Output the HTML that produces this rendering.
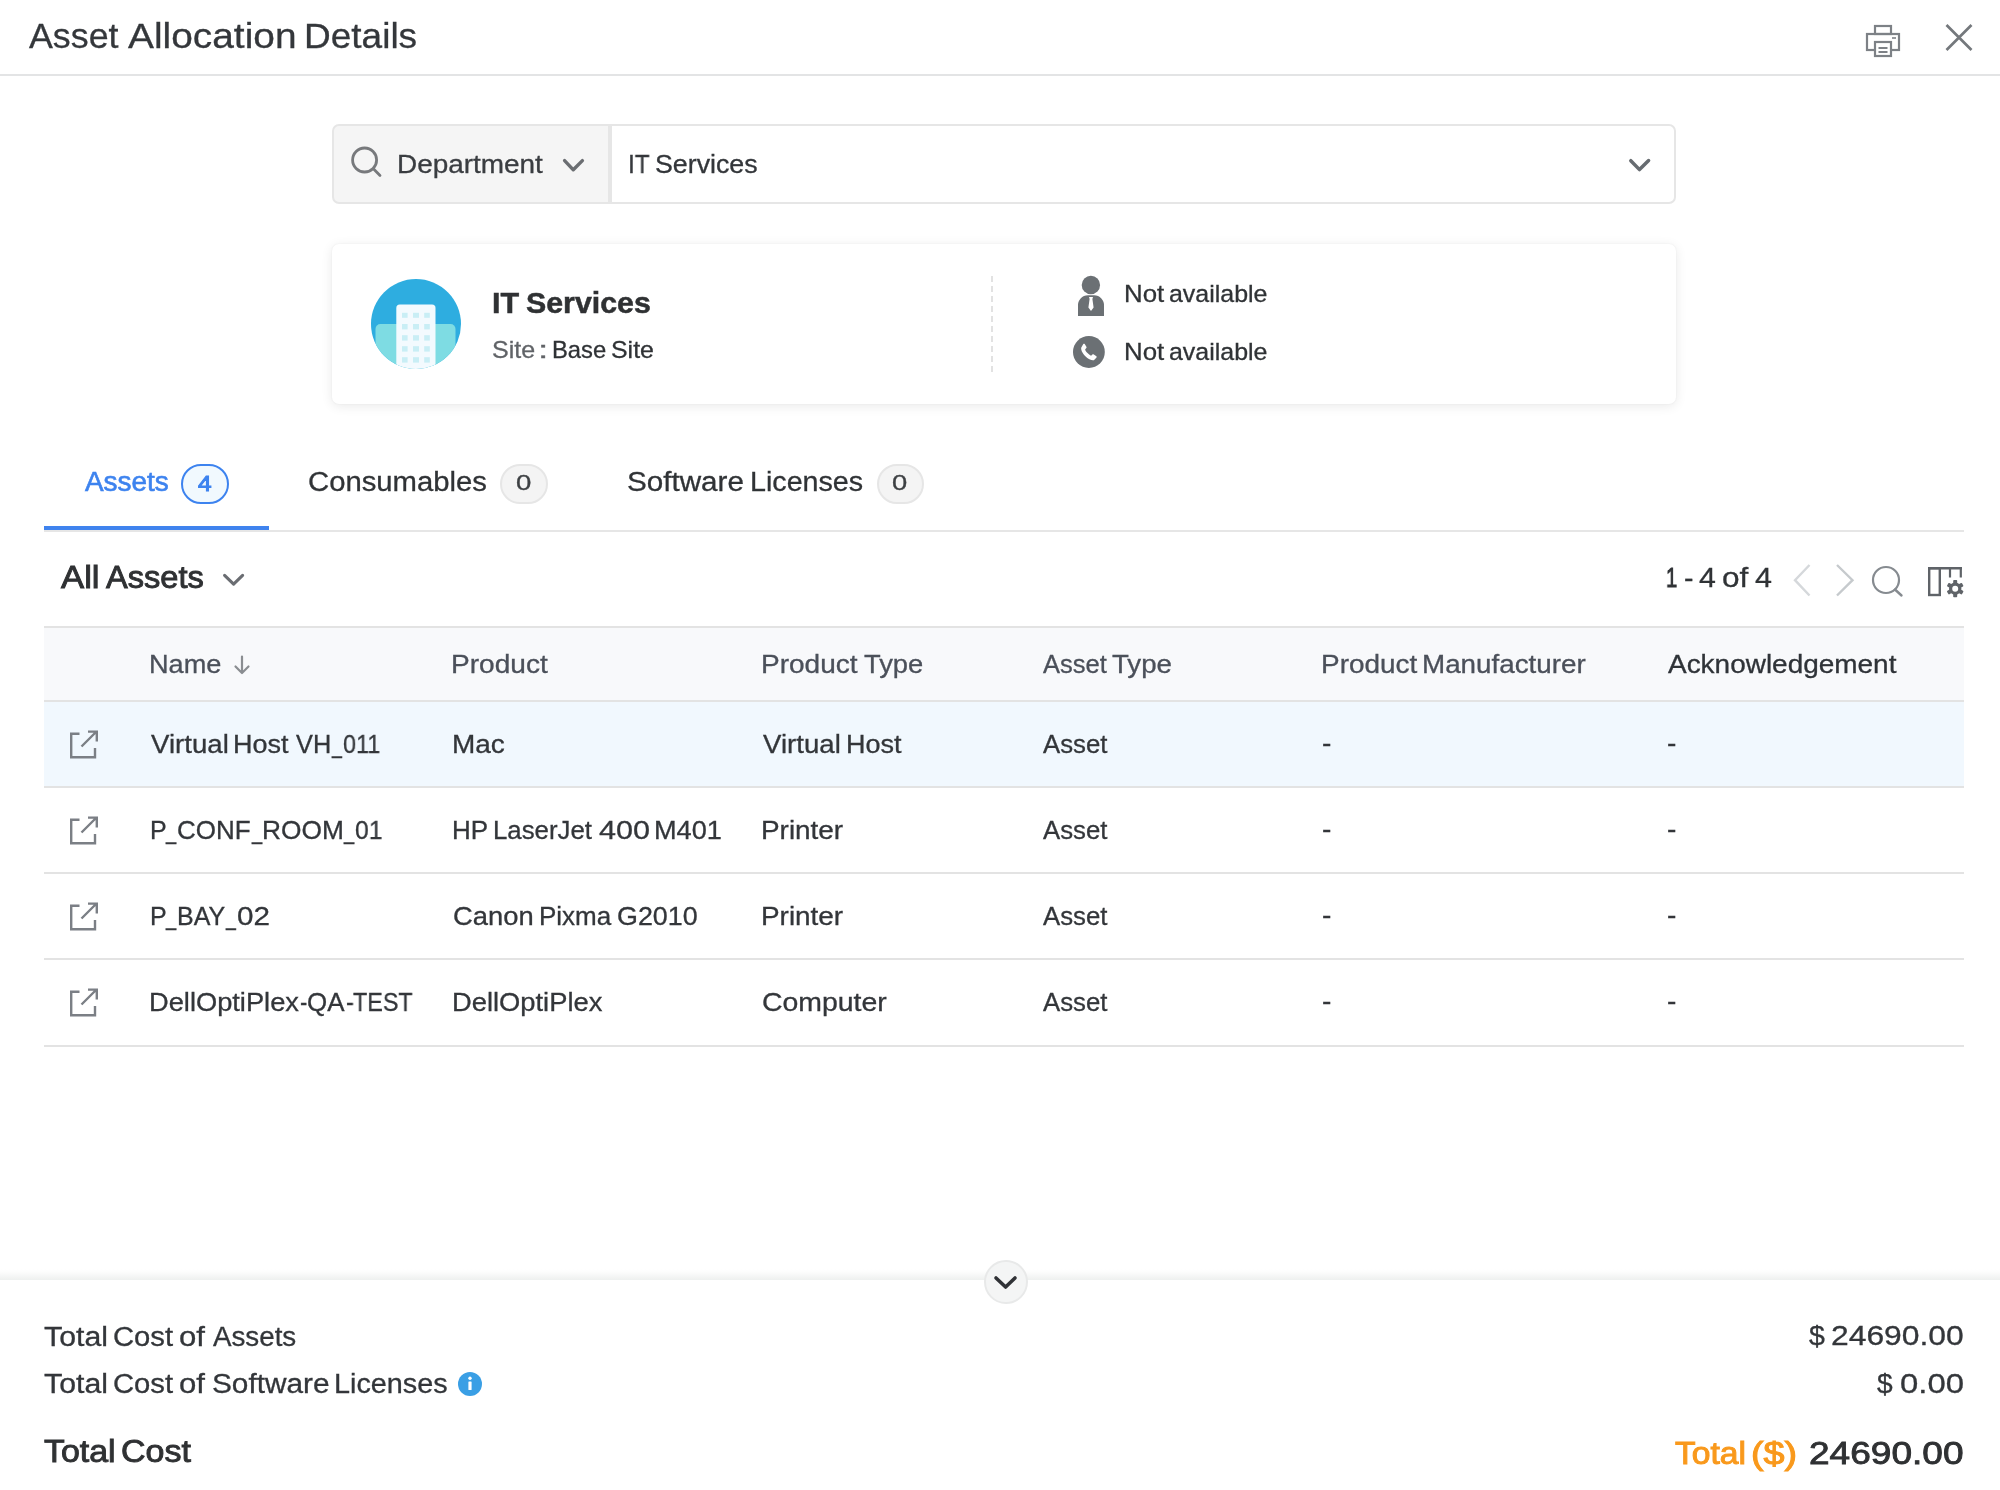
<!DOCTYPE html>
<html lang="en">
<head>
<meta charset="utf-8">
<title>Asset Allocation Details</title>
<style>
*{box-sizing:border-box;margin:0;padding:0}
html,body{width:2000px;height:1490px;overflow:hidden;background:#fff}
body{position:relative;font-family:"Liberation Sans",sans-serif;color:#333}
.t{position:absolute;white-space:pre;transform-origin:0 50%;will-change:transform;-webkit-text-stroke-width:0.3px;font-family:"Liberation Sans",sans-serif}
.a{position:absolute}
svg{position:absolute;overflow:visible}
</style>
</head>
<body>
<!-- header -->
<div class="a" style="left:0;top:74px;width:2000px;height:2px;background:#e3e4e5"></div>
<svg style="left:1860px;top:20px" width="50" height="44" viewBox="1860 20 50 44" fill="none" stroke="#7d8186" stroke-width="2.2">
 <rect x="1875" y="26" width="16" height="8"/>
 <rect x="1867" y="34" width="32" height="16"/>
 <rect x="1875" y="42" width="16" height="14" fill="#fff"/>
 <path d="M1878.5 48H1887.5M1878.5 52H1887.5" stroke-width="1.8"/>
 <path d="M1892 38H1896" stroke-width="1.6"/>
</svg>
<svg style="left:1940px;top:18px" width="40" height="40" viewBox="1940 18 40 40" fill="none" stroke="#74787c" stroke-width="2.7">
 <path d="M1946.5 25L1971.5 50M1971.5 25L1946.5 50"/>
</svg>

<!-- search bar -->
<div class="a" style="left:332px;top:124px;width:278px;height:80px;background:#f5f5f5;border:2px solid #e6e6e6;border-radius:7px 0 0 7px"></div>
<div class="a" style="left:610px;top:124px;width:1066px;height:80px;background:#fff;border:2px solid #e6e6e6;border-radius:0 7px 7px 0"></div>
<svg style="left:345px;top:140px" width="45" height="45" viewBox="345 140 45 45" fill="none" stroke="#77797c" stroke-width="2.8" stroke-linecap="round">
 <circle cx="364.6" cy="160" r="12"/><path d="M373.4 168.8L380 175.4"/>
</svg>
<svg style="left:560px;top:155px" width="30" height="22" viewBox="560 155 30 22" fill="none" stroke="#6b6e72" stroke-width="3.4" stroke-linecap="round" stroke-linejoin="round">
 <path d="M564.6 160.6L573.3 169.8L582.4 160.6"/>
</svg>
<svg style="left:1625px;top:155px" width="30" height="22" viewBox="1625 155 30 22" fill="none" stroke="#676c71" stroke-width="3.5" stroke-linecap="round" stroke-linejoin="round">
 <path d="M1630.8 160.7L1639.5 169.6L1648.6 160.5"/>
</svg>

<!-- card -->
<div class="a" style="left:332px;top:244px;width:1344px;height:160px;background:#fff;border-radius:7px;box-shadow:0 2px 12px rgba(0,0,0,0.09),0 0 2px rgba(0,0,0,0.06)"></div>
<svg style="left:371px;top:279px" width="90" height="90" viewBox="371 279 90 90">
 <defs><clipPath id="av"><circle cx="416" cy="324" r="45"/></clipPath></defs>
 <g clip-path="url(#av)">
  <rect x="371" y="279" width="90" height="90" fill="#2eade0"/>
  <rect x="375.5" y="324" width="80" height="60" rx="5" fill="#7edce3"/>
  <rect x="396.3" y="304.5" width="39.2" height="80" rx="3.5" fill="#f3fafe"/>
  <g fill="#c9eef5">
   <rect x="402" y="312.8" width="5.6" height="5"/><rect x="413" y="312.8" width="6" height="5"/><rect x="424.2" y="312.8" width="5.6" height="5"/>
   <rect x="402" y="324" width="5.6" height="5.4"/><rect x="413" y="324" width="6" height="5.4"/><rect x="424.2" y="324" width="5.6" height="5.4"/>
   <rect x="402" y="335.2" width="5.6" height="5.4"/><rect x="413" y="335.2" width="6" height="5.4"/><rect x="424.2" y="335.2" width="5.6" height="5.4"/>
   <rect x="402" y="346.2" width="5.6" height="5.4"/><rect x="413" y="346.2" width="6" height="5.4"/><rect x="424.2" y="346.2" width="5.6" height="5.4"/>
   <rect x="402" y="357.2" width="5.6" height="5.4"/><rect x="413" y="357.2" width="6" height="5.4"/><rect x="424.2" y="357.2" width="5.6" height="5.4"/>
  </g>
 </g>
</svg>
<svg style="left:988px;top:274px" width="8" height="100" viewBox="988 274 8 100"><path d="M992 276V372" stroke="#e2e2e2" stroke-width="2" stroke-dasharray="6 4" fill="none"/></svg>
<svg style="left:1070px;top:270px" width="40" height="50" viewBox="1070 270 40 50">
 <circle cx="1090.9" cy="285" r="9.2" fill="#6b7074"/>
 <path d="M1078 316V306a10 10 0 0 1 10-10.8h6a10 10 0 0 1 10 10.8V316Z" fill="#6b7074"/>
 <path d="M1089 297h4l-0.6 2 1.2 8.5-2.6 3.5-2.6-3.5 1.2-8.5Z" fill="#fff"/>
</svg>
<svg style="left:1070px;top:334px" width="38" height="38" viewBox="1070 334 38 38">
 <circle cx="1088.9" cy="352" r="15.9" fill="#6b7074"/>
 <path transform="translate(0 1.2)" d="M1081.3 346.2c-0.6 1.6 0.6 5.2 3.8 8.6 3.4 3.4 7 4.8 8.8 4.2l2.6-2.6c0.4-0.5 0.3-1-0.1-1.4l-2.6-1.8c-0.5-0.3-1-0.3-1.4 0.1l-1.3 1.2c-1.2-0.5-2.6-1.5-3.6-2.6-1.1-1.1-2-2.5-2.4-3.7l1.2-1.3c0.4-0.4 0.4-0.9 0.1-1.4l-1.7-2.6c-0.4-0.5-0.9-0.5-1.4-0.1Z" fill="#fff"/>
</svg>

<!-- tabs -->
<div class="a" style="left:44px;top:530px;width:1920px;height:2px;background:#e6e6e6"></div>
<div class="a" style="left:44px;top:526px;width:225px;height:4px;background:#3f83ee"></div>
<div class="a" style="left:181px;top:464px;width:48px;height:40px;border:2px solid #3d83ef;border-radius:20px;background:#f1f9fe"></div>
<div class="a" style="left:500px;top:464px;width:47.5px;height:40px;border:2px solid #e6e6e6;border-radius:20px;background:#f4f4f4"></div>
<div class="a" style="left:876.5px;top:464px;width:47px;height:40px;border:2px solid #e6e6e6;border-radius:20px;background:#f4f4f4"></div>

<!-- list header icons -->
<svg style="left:218px;top:568px" width="32" height="24" viewBox="218 568 32 24" fill="none" stroke="#6a6d72" stroke-width="3.1" stroke-linecap="round" stroke-linejoin="round">
 <path d="M224.6 575.4L233.6 584.2L242.6 575.4"/>
</svg>
<svg style="left:1790px;top:560px" width="180" height="40" viewBox="1790 560 180 40" fill="none">
 <path d="M1809.5 565L1795 580.2L1809.5 595.5" stroke="#d5d8db" stroke-width="2.4"/>
 <path d="M1837 565L1852.5 580.2L1837 595.5" stroke="#c6cacd" stroke-width="2.4"/>
 <circle cx="1886" cy="580" r="13" stroke="#868b90" stroke-width="2.2"/>
 <path d="M1895 589.5L1901.5 595.5" stroke="#868b90" stroke-width="2.4" stroke-linecap="round"/>
 <g stroke="#5f6368" stroke-width="2.4">
  <path d="M1928 568.2H1962"/><rect x="1929.2" y="568.2" width="10.6" height="26.8"/>
  <path d="M1950 568V577.5M1960.8 568V577.5" stroke-width="2.2"/>
 </g>
 <g transform="translate(1955.2 588.7)" fill="#5f6368">
  <circle r="6.2"/>
  <g><rect x="-2" y="-8.6" width="4" height="17.2" rx="0.8"/><rect x="-2" y="-8.6" width="4" height="17.2" rx="0.8" transform="rotate(60)"/><rect x="-2" y="-8.6" width="4" height="17.2" rx="0.8" transform="rotate(120)"/></g>
  <circle r="3" fill="#fff"/>
 </g>
</svg>

<!-- table -->
<div class="a" style="left:44px;top:626px;width:1920px;height:76px;background:#f8f9fb;border-top:2px solid #e3e3e3;border-bottom:2px solid #e3e3e3"></div>
<div class="a" style="left:44px;top:702px;width:1920px;height:84px;background:#f1f8fe"></div>
<div class="a" style="left:44px;top:786px;width:1920px;height:2px;background:#e3e3e3"></div>
<div class="a" style="left:44px;top:872px;width:1920px;height:2px;background:#e3e3e3"></div>
<div class="a" style="left:44px;top:958px;width:1920px;height:2px;background:#e3e3e3"></div>
<div class="a" style="left:44px;top:1045px;width:1920px;height:2px;background:#e3e3e3"></div>
<svg style="left:230px;top:652px" width="24" height="26" viewBox="230 652 24 26" fill="none" stroke="#8a8d91" stroke-width="2.2" stroke-linecap="round" stroke-linejoin="round">
 <path d="M242 656.5V672.5M235.5 666.5L242 673L248.5 666.5"/>
</svg>
<svg style="left:0;top:0" width="2000" height="1490" viewBox="0 0 2000 1490" fill="none" stroke="#7b7f85" stroke-width="2.4">
 <g transform="translate(0 0)"><path d="M79.5 733.8H71.2V757.2H95V748"/><path d="M81.5 746.5L96.5 731.5M88 731.6H96.8V741.5"/></g>
 <g transform="translate(0 86)"><path d="M79.5 733.8H71.2V757.2H95V748"/><path d="M81.5 746.5L96.5 731.5M88 731.6H96.8V741.5"/></g>
 <g transform="translate(0 172)"><path d="M79.5 733.8H71.2V757.2H95V748"/><path d="M81.5 746.5L96.5 731.5M88 731.6H96.8V741.5"/></g>
 <g transform="translate(0 258)"><path d="M79.5 733.8H71.2V757.2H95V748"/><path d="M81.5 746.5L96.5 731.5M88 731.6H96.8V741.5"/></g>
</svg>

<!-- footer -->
<div class="a" style="left:0;top:1269px;width:2000px;height:11px;background:linear-gradient(to bottom,rgba(238,240,239,0) 0%,rgba(238,240,239,0.12) 25%,rgba(238,240,239,0.55) 62%,#eef0ef 100%)"></div>
<div class="a" style="left:984px;top:1260px;width:44px;height:44px;border-radius:22px;background:#f4f5f5;border:2px solid #e8e9e9"></div>
<svg style="left:990px;top:1270px" width="32" height="24" viewBox="990 1270 32 24" fill="none" stroke="#303236" stroke-width="3.6" stroke-linecap="round" stroke-linejoin="round">
 <path d="M996 1278L1005.6 1287L1015 1278"/>
</svg>
<svg style="left:456px;top:1370px" width="28" height="28" viewBox="456 1370 28 28">
 <circle cx="470" cy="1384" r="12" fill="#3a9fe5"/>
 <circle cx="470" cy="1378.3" r="1.7" fill="#fff"/>
 <rect x="468.4" y="1381.5" width="3.2" height="8.6" rx="0.6" fill="#fff"/>
</svg>

<div class="t" style="left:29.30px;top:15.27px;font-size:35px;line-height:42px;color:#34373b;transform:scaleX(1.0223);">Asset</div>
<div class="t" style="left:128.00px;top:15.27px;font-size:35px;line-height:42px;color:#34373b;transform:scaleX(1.1104);">Allocation</div>
<div class="t" style="left:303.69px;top:15.27px;font-size:35px;line-height:42px;color:#34373b;transform:scaleX(1.0573);">Details</div>
<div class="t" style="left:396.77px;top:148.84px;font-size:25px;line-height:30px;color:#3a3d41;transform:scaleX(1.1167);">Department</div>
<div class="t" style="left:627.61px;top:148.84px;font-size:25px;line-height:30px;color:#33363a;transform:scaleX(0.9744);">IT</div>
<div class="t" style="left:654.80px;top:148.84px;font-size:25px;line-height:30px;color:#33363a;transform:scaleX(1.0706);">Services</div>
<div class="t" style="left:491.87px;top:284.74px;font-size:29.6px;line-height:36px;color:#2f3133;transform:scaleX(1.0309);font-weight:700;-webkit-text-stroke-width:0.5px;">IT</div>
<div class="t" style="left:525.73px;top:284.74px;font-size:29.6px;line-height:36px;color:#2f3133;transform:scaleX(1.0250);font-weight:700;-webkit-text-stroke-width:0.5px;">Services</div>
<div class="t" style="left:491.95px;top:335.05px;font-size:23.8px;line-height:29px;color:#606367;transform:scaleX(1.0513);">Site</div>
<div class="t" style="left:538.49px;top:335.05px;font-size:23.8px;line-height:29px;color:#606367;transform:scaleX(1.5579);">:</div>
<div class="t" style="left:552.34px;top:335.05px;font-size:23.8px;line-height:29px;color:#2f3235;transform:scaleX(0.9912);">Base</div>
<div class="t" style="left:611.15px;top:335.05px;font-size:23.8px;line-height:29px;color:#2f3235;transform:scaleX(1.0462);">Site</div>
<div class="t" style="left:1123.79px;top:279.15px;font-size:24.1px;line-height:29px;color:#303336;transform:scaleX(1.0723);">Not</div>
<div class="t" style="left:1169.07px;top:279.15px;font-size:24.1px;line-height:29px;color:#303336;transform:scaleX(1.0349);">available</div>
<div class="t" style="left:1123.79px;top:337.15px;font-size:24.1px;line-height:29px;color:#303336;transform:scaleX(1.0723);">Not</div>
<div class="t" style="left:1169.07px;top:337.15px;font-size:24.1px;line-height:29px;color:#303336;transform:scaleX(1.0349);">available</div>
<div class="t" style="left:85.00px;top:466.34px;font-size:27px;line-height:32px;color:#3d83ef;transform:scaleX(1.0334);-webkit-text-stroke-width:0.6px;">Assets</div>
<div class="t" style="left:308.44px;top:466.24px;font-size:27px;line-height:32px;color:#303336;transform:scaleX(1.0840);">Consumables</div>
<div class="t" style="left:627.37px;top:466.24px;font-size:27px;line-height:32px;color:#303336;transform:scaleX(1.0974);">Software</div>
<div class="t" style="left:750.04px;top:466.24px;font-size:27px;line-height:32px;color:#303336;transform:scaleX(1.0618);">Licenses</div>
<div class="t" style="left:197.95px;top:469.77px;font-size:22.3px;line-height:27px;color:#3d83ef;transform:scaleX(1.0933);-webkit-text-stroke-width:1px;">4</div>
<div class="t" style="left:515.94px;top:470.15px;font-size:21.5px;line-height:26px;color:#3d4043;transform:scaleX(1.2819);">0</div>
<div class="t" style="left:892.05px;top:470.15px;font-size:21.5px;line-height:26px;color:#3d4043;transform:scaleX(1.2723);">0</div>
<div class="t" style="left:60.80px;top:559.49px;font-size:31.2px;line-height:37px;color:#2f3133;transform:scaleX(1.1126);-webkit-text-stroke-width:0.9px;">All</div>
<div class="t" style="left:105.90px;top:559.49px;font-size:31.2px;line-height:37px;color:#2f3133;transform:scaleX(1.0451);-webkit-text-stroke-width:0.9px;">Assets</div>
<div class="t" style="left:1665.99px;top:560.29px;font-size:28.3px;line-height:34px;color:#303336;transform:scaleX(0.7102);-webkit-text-stroke-width:1.00px;">1</div>
<div class="t" style="left:1684.10px;top:560.29px;font-size:28.3px;line-height:34px;color:#303336;transform:scaleX(0.9571);">-</div>
<div class="t" style="left:1699.33px;top:560.29px;font-size:28.3px;line-height:34px;color:#303336;transform:scaleX(1.0713);">4</div>
<div class="t" style="left:1721.55px;top:560.29px;font-size:28.3px;line-height:34px;color:#303336;transform:scaleX(1.1138);">of</div>
<div class="t" style="left:1754.83px;top:560.29px;font-size:28.3px;line-height:34px;color:#303336;transform:scaleX(1.0783);">4</div>
<div class="t" style="left:149.43px;top:649.14px;font-size:25px;line-height:30px;color:#4b505a;transform:scaleX(1.0845);">Name</div>
<div class="t" style="left:451.25px;top:649.14px;font-size:25px;line-height:30px;color:#4b505a;transform:scaleX(1.1233);">Product</div>
<div class="t" style="left:760.76px;top:649.14px;font-size:25px;line-height:30px;color:#4b505a;transform:scaleX(1.1210);">Product</div>
<div class="t" style="left:863.65px;top:649.14px;font-size:25px;line-height:30px;color:#4b505a;transform:scaleX(1.0926);">Type</div>
<div class="t" style="left:1043.10px;top:649.14px;font-size:25px;line-height:30px;color:#4b505a;transform:scaleX(1.0192);">Asset</div>
<div class="t" style="left:1112.45px;top:649.14px;font-size:25px;line-height:30px;color:#4b505a;transform:scaleX(1.1059);">Type</div>
<div class="t" style="left:1320.97px;top:649.14px;font-size:25px;line-height:30px;color:#4b505a;transform:scaleX(1.1174);">Product</div>
<div class="t" style="left:1422.38px;top:649.14px;font-size:25px;line-height:30px;color:#4b505a;transform:scaleX(1.1117);">Manufacturer</div>
<div class="t" style="left:1668.30px;top:649.14px;font-size:25px;line-height:30px;color:#2f3338;transform:scaleX(1.1182);">Acknowledgement</div>
<div class="t" style="left:150.80px;top:728.94px;font-size:25px;line-height:30px;color:#33363a;transform:scaleX(1.1049);">Virtual</div>
<div class="t" style="left:233.44px;top:728.94px;font-size:25px;line-height:30px;color:#33363a;transform:scaleX(1.0795);">Host</div>
<div class="t" style="left:296.00px;top:728.94px;font-size:25px;line-height:30px;color:#33363a;transform:scaleX(1.0137);">VH</div>
<div class="t" style="left:332.15px;top:728.94px;font-size:25px;line-height:30px;color:#33363a;transform:scaleX(0.7051);">_</div>
<div class="t" style="left:343.08px;top:728.94px;font-size:25px;line-height:30px;color:#33363a;transform:scaleX(0.9347);">011</div>
<div class="t" style="left:452.16px;top:728.94px;font-size:25px;line-height:30px;color:#33363a;transform:scaleX(1.1182);">Mac</div>
<div class="t" style="left:763.30px;top:728.94px;font-size:25px;line-height:30px;color:#33363a;transform:scaleX(1.1049);">Virtual</div>
<div class="t" style="left:845.94px;top:728.94px;font-size:25px;line-height:30px;color:#33363a;transform:scaleX(1.0795);">Host</div>
<div class="t" style="left:149.60px;top:815.14px;font-size:25px;line-height:30px;color:#33363a;">P</div>
<div class="t" style="left:166.27px;top:815.14px;font-size:25px;line-height:30px;color:#33363a;transform:scaleX(0.7322);">_</div>
<div class="t" style="left:177.30px;top:815.14px;font-size:25px;line-height:30px;color:#33363a;transform:scaleX(1.0390);">CONF</div>
<div class="t" style="left:251.57px;top:815.14px;font-size:25px;line-height:30px;color:#33363a;transform:scaleX(0.7322);">_</div>
<div class="t" style="left:262.20px;top:815.14px;font-size:25px;line-height:30px;color:#33363a;transform:scaleX(1.0518);">ROOM</div>
<div class="t" style="left:344.17px;top:815.14px;font-size:25px;line-height:30px;color:#33363a;transform:scaleX(0.7322);">_</div>
<div class="t" style="left:355.34px;top:815.14px;font-size:25px;line-height:30px;color:#33363a;transform:scaleX(0.9864);">01</div>
<div class="t" style="left:452.12px;top:815.14px;font-size:25px;line-height:30px;color:#33363a;transform:scaleX(1.0390);">HP</div>
<div class="t" style="left:492.64px;top:815.14px;font-size:25px;line-height:30px;color:#33363a;transform:scaleX(1.0312);">LaserJet</div>
<div class="t" style="left:598.69px;top:815.14px;font-size:25px;line-height:30px;color:#33363a;transform:scaleX(1.2224);">400</div>
<div class="t" style="left:653.83px;top:815.14px;font-size:25px;line-height:30px;color:#33363a;transform:scaleX(1.0863);">M401</div>
<div class="t" style="left:760.77px;top:815.14px;font-size:25px;line-height:30px;color:#33363a;transform:scaleX(1.1158);">Printer</div>
<div class="t" style="left:149.60px;top:900.94px;font-size:25px;line-height:30px;color:#33363a;">P</div>
<div class="t" style="left:166.27px;top:900.94px;font-size:25px;line-height:30px;color:#33363a;transform:scaleX(0.7322);">_</div>
<div class="t" style="left:176.61px;top:900.94px;font-size:25px;line-height:30px;color:#33363a;transform:scaleX(0.9973);">BAY</div>
<div class="t" style="left:226.05px;top:900.94px;font-size:25px;line-height:30px;color:#33363a;transform:scaleX(0.6983);">_</div>
<div class="t" style="left:236.56px;top:900.94px;font-size:25px;line-height:30px;color:#33363a;transform:scaleX(1.1845);">02</div>
<div class="t" style="left:452.83px;top:900.94px;font-size:25px;line-height:30px;color:#33363a;transform:scaleX(1.0949);">Canon</div>
<div class="t" style="left:538.72px;top:900.94px;font-size:25px;line-height:30px;color:#33363a;transform:scaleX(1.0400);">Pixma</div>
<div class="t" style="left:617.16px;top:900.94px;font-size:25px;line-height:30px;color:#33363a;transform:scaleX(1.0744);">G2010</div>
<div class="t" style="left:760.77px;top:900.94px;font-size:25px;line-height:30px;color:#33363a;transform:scaleX(1.1158);">Printer</div>
<div class="t" style="left:149.42px;top:987.04px;font-size:25px;line-height:30px;color:#33363a;transform:scaleX(1.0898);">DellOptiPlex</div>
<div class="t" style="left:300.02px;top:987.04px;font-size:25px;line-height:30px;color:#33363a;transform:scaleX(0.8800);">-</div>
<div class="t" style="left:307.13px;top:987.04px;font-size:25px;line-height:30px;color:#33363a;transform:scaleX(1.0371);">QA</div>
<div class="t" style="left:345.96px;top:987.04px;font-size:25px;line-height:30px;color:#33363a;transform:scaleX(0.9440);">-</div>
<div class="t" style="left:353.33px;top:987.04px;font-size:25px;line-height:30px;color:#33363a;transform:scaleX(0.9336);">TEST</div>
<div class="t" style="left:452.01px;top:987.04px;font-size:25px;line-height:30px;color:#33363a;transform:scaleX(1.0928);">DellOptiPlex</div>
<div class="t" style="left:761.58px;top:987.04px;font-size:25px;line-height:30px;color:#33363a;transform:scaleX(1.1363);">Computer</div>
<div class="t" style="left:1043.10px;top:728.94px;font-size:25px;line-height:30px;color:#33363a;transform:scaleX(1.0304);">Asset</div>
<div class="t" style="left:1321.68px;top:728.14px;font-size:25px;line-height:30px;color:#33363a;transform:scaleX(1.1200);">-</div>
<div class="t" style="left:1666.68px;top:728.14px;font-size:25px;line-height:30px;color:#33363a;transform:scaleX(1.1200);">-</div>
<div class="t" style="left:1043.10px;top:815.14px;font-size:25px;line-height:30px;color:#33363a;transform:scaleX(1.0304);">Asset</div>
<div class="t" style="left:1321.68px;top:814.34px;font-size:25px;line-height:30px;color:#33363a;transform:scaleX(1.1200);">-</div>
<div class="t" style="left:1666.68px;top:814.34px;font-size:25px;line-height:30px;color:#33363a;transform:scaleX(1.1200);">-</div>
<div class="t" style="left:1043.10px;top:900.94px;font-size:25px;line-height:30px;color:#33363a;transform:scaleX(1.0304);">Asset</div>
<div class="t" style="left:1321.68px;top:900.14px;font-size:25px;line-height:30px;color:#33363a;transform:scaleX(1.1200);">-</div>
<div class="t" style="left:1666.68px;top:900.14px;font-size:25px;line-height:30px;color:#33363a;transform:scaleX(1.1200);">-</div>
<div class="t" style="left:1043.10px;top:987.04px;font-size:25px;line-height:30px;color:#33363a;transform:scaleX(1.0304);">Asset</div>
<div class="t" style="left:1321.68px;top:986.24px;font-size:25px;line-height:30px;color:#33363a;transform:scaleX(1.1200);">-</div>
<div class="t" style="left:1666.68px;top:986.24px;font-size:25px;line-height:30px;color:#33363a;transform:scaleX(1.1200);">-</div>
<div class="t" style="left:44.04px;top:1320.64px;font-size:27px;line-height:32px;color:#33363a;transform:scaleX(1.1215);">Total</div>
<div class="t" style="left:112.75px;top:1320.64px;font-size:27px;line-height:32px;color:#33363a;transform:scaleX(1.0827);">Cost</div>
<div class="t" style="left:179.00px;top:1320.64px;font-size:27px;line-height:32px;color:#33363a;transform:scaleX(1.1535);">of</div>
<div class="t" style="left:213.00px;top:1320.64px;font-size:27px;line-height:32px;color:#33363a;transform:scaleX(1.0271);">Assets</div>
<div class="t" style="left:44.04px;top:1368.24px;font-size:27px;line-height:32px;color:#33363a;transform:scaleX(1.1215);">Total</div>
<div class="t" style="left:112.75px;top:1368.24px;font-size:27px;line-height:32px;color:#33363a;transform:scaleX(1.0827);">Cost</div>
<div class="t" style="left:179.00px;top:1368.24px;font-size:27px;line-height:32px;color:#33363a;transform:scaleX(1.1535);">of</div>
<div class="t" style="left:211.76px;top:1368.24px;font-size:27px;line-height:32px;color:#33363a;transform:scaleX(1.1031);">Software</div>
<div class="t" style="left:334.43px;top:1368.24px;font-size:27px;line-height:32px;color:#33363a;transform:scaleX(1.0667);">Licenses</div>
<div class="t" style="left:43.82px;top:1432.95px;font-size:31.3px;line-height:38px;color:#2f3133;transform:scaleX(1.0840);-webkit-text-stroke-width:0.9px;">Total</div>
<div class="t" style="left:121.37px;top:1432.95px;font-size:31.3px;line-height:38px;color:#2f3133;transform:scaleX(1.0858);-webkit-text-stroke-width:0.9px;">Cost</div>
<div class="t" style="left:1809.34px;top:1318.98px;font-size:27.2px;line-height:33px;color:#33363a;transform:scaleX(1.0483);">$</div>
<div class="t" style="left:1830.54px;top:1318.98px;font-size:27.2px;line-height:33px;color:#33363a;transform:scaleX(1.1708);">24690.00</div>
<div class="t" style="left:1877.04px;top:1366.98px;font-size:27.2px;line-height:33px;color:#33363a;transform:scaleX(1.0345);">$</div>
<div class="t" style="left:1899.59px;top:1366.98px;font-size:27.2px;line-height:33px;color:#33363a;transform:scaleX(1.2078);">0.00</div>
<div class="t" style="left:1674.53px;top:1435.02px;font-size:31.4px;line-height:38px;color:#f9991c;transform:scaleX(1.0709);-webkit-text-stroke-width:1px;">Total</div>
<div class="t" style="left:1750.55px;top:1435.02px;font-size:31.4px;line-height:38px;color:#f9991c;transform:scaleX(1.2014);-webkit-text-stroke-width:1px;">($)</div>
<div class="t" style="left:1809.43px;top:1435.02px;font-size:31.4px;line-height:38px;color:#2f3133;transform:scaleX(1.1801);-webkit-text-stroke-width:0.85px;">24690.00</div>
</body>
</html>
